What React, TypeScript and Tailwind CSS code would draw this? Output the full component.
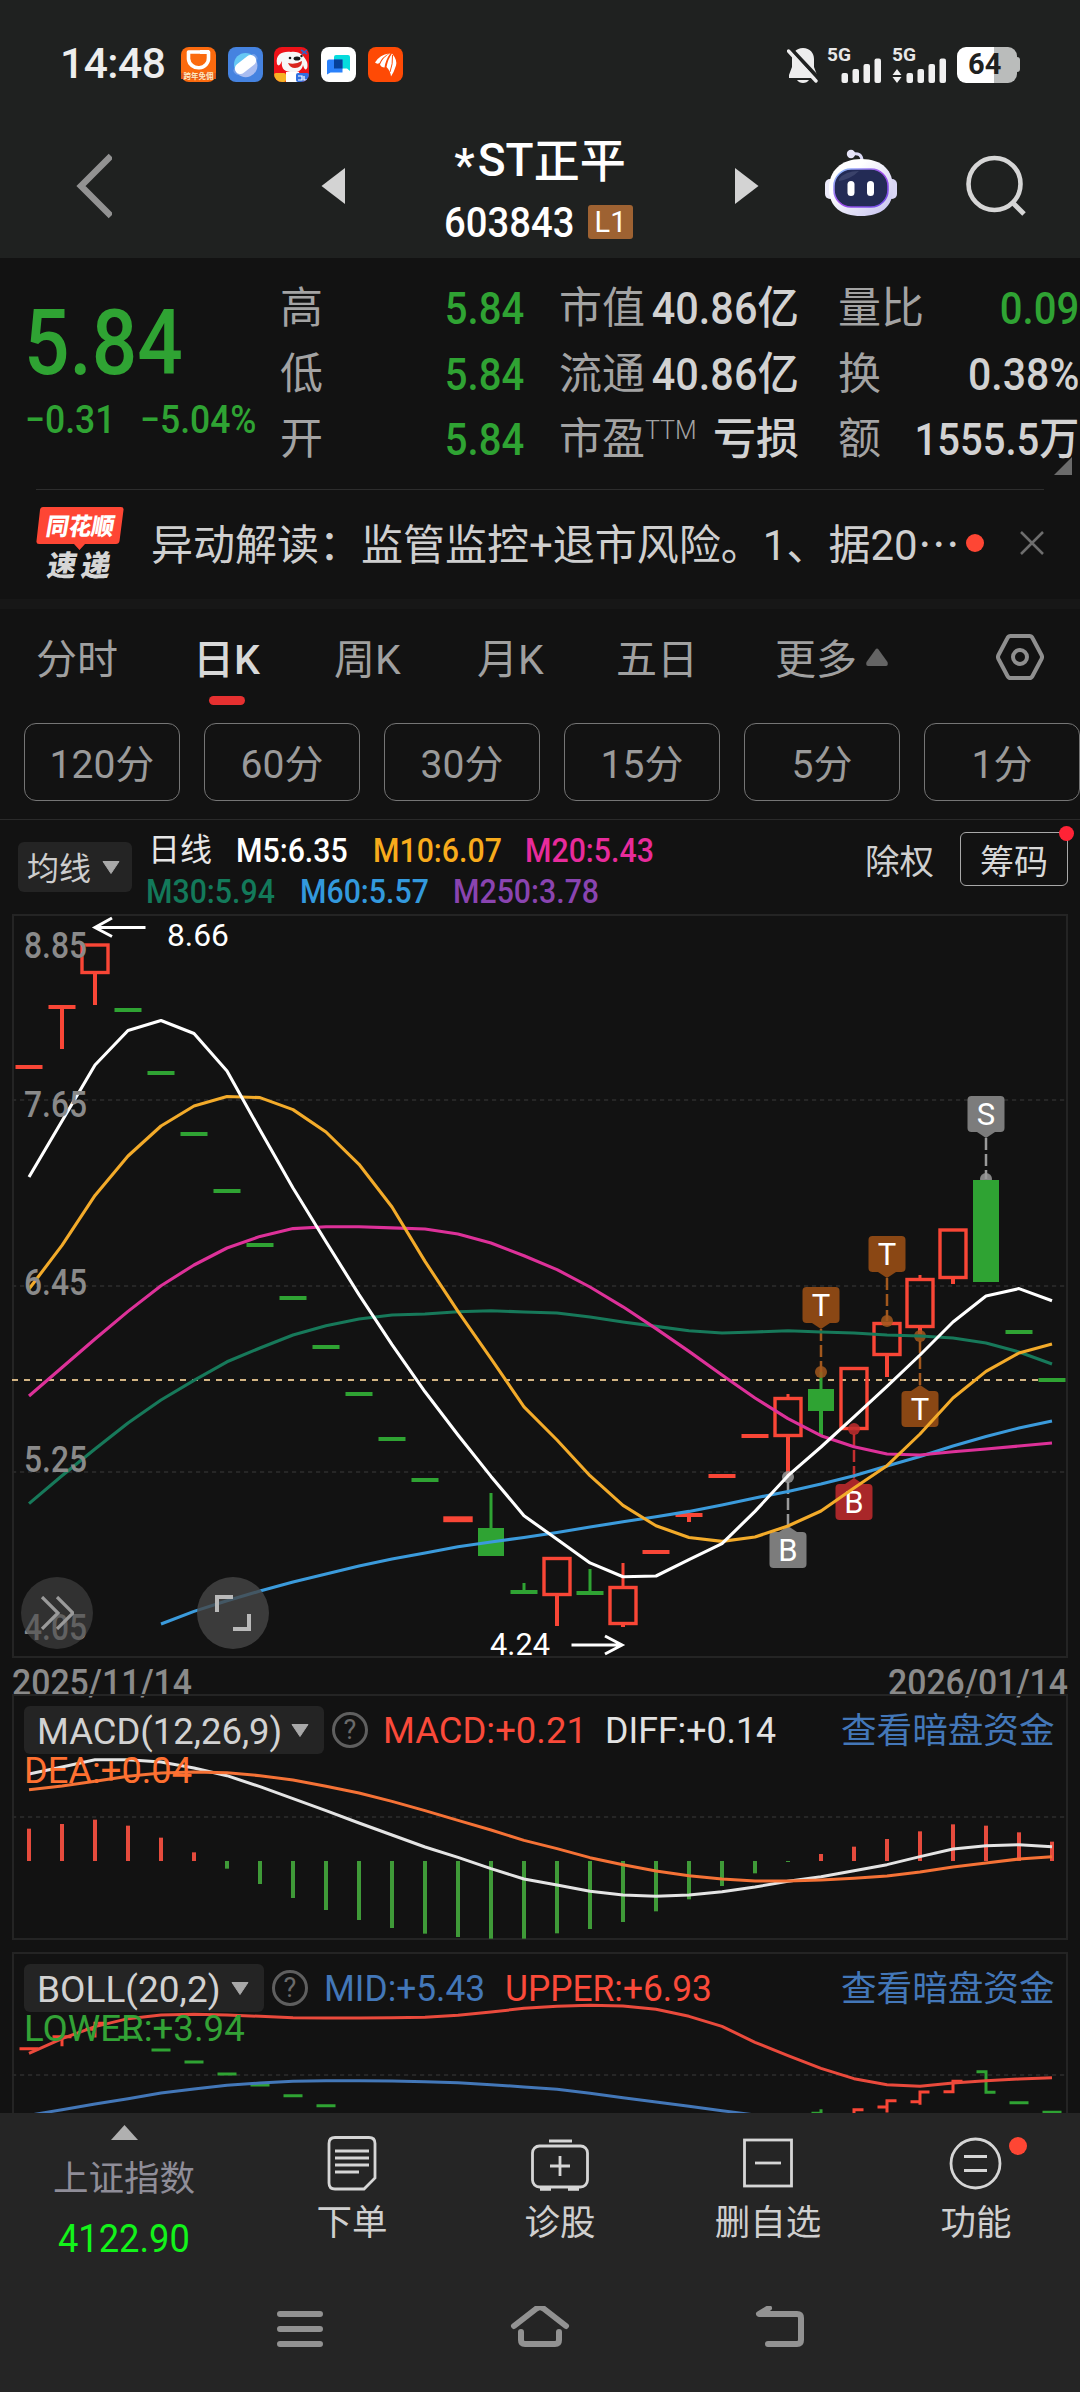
import React from "react";

const X0 = 29;
const STEP = 33;
const px = (i: number) => X0 + STEP * i;
const toPoints = (ys: number[], start = 0) => ys.map((y, i) => `${px(i + start)},${y}`).join(" ");

const RED = "#f94636";
const GREEN = "#2fa333";

type Candle = { k: "dash" | "up" | "down"; c?: string; top: number; bottom?: number; hi?: number; lo?: number };

const candles: Candle[] = [
  { k: "dash", c: RED, top: 1067 },
  { k: "dash", c: RED, top: 1007, lo: 1049 },
  { k: "up", top: 943.5, bottom: 974, lo: 1005 },
  { k: "dash", c: GREEN, top: 1010 },
  { k: "dash", c: GREEN, top: 1073 },
  { k: "dash", c: GREEN, top: 1134 },
  { k: "dash", c: GREEN, top: 1191 },
  { k: "dash", c: GREEN, top: 1245 },
  { k: "dash", c: GREEN, top: 1298 },
  { k: "dash", c: GREEN, top: 1347 },
  { k: "dash", c: GREEN, top: 1394 },
  { k: "dash", c: GREEN, top: 1439 },
  { k: "dash", c: GREEN, top: 1480 },
  { k: "up", top: 1516.5, bottom: 1522 },
  { k: "down", top: 1528, bottom: 1556, hi: 1493 },
  { k: "dash", c: GREEN, top: 1592, hi: 1583 },
  { k: "up", top: 1557, bottom: 1596, lo: 1626 },
  { k: "dash", c: GREEN, top: 1593, hi: 1569 },
  { k: "up", top: 1586, bottom: 1625, hi: 1563, lo: 1627 },
  { k: "dash", c: RED, top: 1552 },
  { k: "dash", c: RED, top: 1515, lo: 1522 },
  { k: "dash", c: RED, top: 1476 },
  { k: "dash", c: RED, top: 1436 },
  { k: "up", top: 1397, bottom: 1437, hi: 1394, lo: 1476 },
  { k: "down", top: 1389, bottom: 1411, hi: 1372, lo: 1435 },
  { k: "up", top: 1367, bottom: 1430 },
  { k: "up", top: 1322, bottom: 1356, lo: 1377 },
  { k: "up", top: 1278, bottom: 1328, hi: 1275, lo: 1334 },
  { k: "up", top: 1228.5, bottom: 1279, lo: 1284 },
  { k: "down", top: 1180, bottom: 1282 },
  { k: "dash", c: GREEN, top: 1332 },
  { k: "dash", c: GREEN, top: 1380 },
];

const m5 = [1177, 1121, 1065, 1030.5, 1020.5, 1033.5, 1071, 1130, 1188, 1241.8, 1294.6, 1344.6, 1391.8, 1435, 1476.4, 1515.7, 1539.3, 1562.9, 1576.8, 1576, 1559.6, 1543.6, 1511.4, 1475.7, 1447, 1416.8, 1386.4, 1355, 1322, 1296, 1288.6, 1300.7];
const m10 = [1289, 1245.4, 1195.4, 1156, 1126, 1106, 1096.5, 1097.6, 1109.6, 1132, 1164.3, 1207, 1261.4, 1311.4, 1358.6, 1406.8, 1440, 1475.7, 1505.4, 1525.7, 1537.5, 1541.4, 1537, 1526, 1511, 1488, 1465.7, 1434, 1398, 1371.4, 1353, 1344];
const m20 = [1396, 1367.5, 1339, 1311.4, 1285.7, 1265, 1248, 1236.4, 1228.6, 1226.8, 1226.8, 1227.9, 1229, 1234, 1243, 1255.7, 1269.6, 1287, 1306.8, 1328.6, 1351.4, 1375, 1398, 1418.6, 1435.7, 1446.8, 1454, 1455, 1451.8, 1449, 1446, 1443];
const m30 = [1503.6, 1475.7, 1449, 1423, 1400, 1380.4, 1361.8, 1348, 1335, 1325.7, 1319, 1315, 1314, 1311.8, 1310.7, 1312, 1313, 1317, 1322, 1326.4, 1330.7, 1333, 1332, 1330.7, 1332, 1333, 1335, 1336, 1338, 1343, 1352, 1364];
const m60 = [1624, 1611.4, 1600.7, 1591, 1582, 1574, 1566, 1559, 1553, 1546.8, 1542, 1537.5, 1532.5, 1527, 1521.8, 1516.8, 1511.4, 1505, 1498, 1491.4, 1484, 1475.7, 1466, 1456.4, 1446, 1436.4, 1428, 1421];

const sub = (v: number) => 1690 + v / 3;
const hist = [416, 402, 389, 407, 443, 487, 536, 582, 624, 660, 690, 714, 731, 741, 746, 746, 730, 717, 696, 664, 628, 588, 550, 516, 492, 470, 447, 424, 403, 407, 427, 455];
const diff = [252, 231, 209, 209, 216, 234, 257, 290, 326, 362, 399, 435, 471, 502, 536, 567, 585, 604, 615, 619, 615, 605, 591, 574, 560, 542, 524, 500, 477, 467, 464, 470].map(sub);
const dea = [299, 288, 274, 259, 249, 246, 248, 257, 270, 289, 309, 334, 362, 391, 420, 451, 476, 503, 524, 543, 557, 567, 573, 573, 570, 565, 558, 546, 531, 519, 507, 500].map(sub);
const upper = [1090, 1046, 1010, 986, 975, 973, 975, 979, 983, 984, 984, 983, 982, 976, 966, 955, 949, 946, 948, 958, 979, 1009, 1057, 1097, 1135, 1166, 1184, 1189, 1179, 1172, 1167, 1163].map(sub);
const mid = [1276, 1259, 1242, 1226, 1209, 1197, 1186, 1179, 1174, 1172, 1172, 1173, 1175, 1178, 1184, 1191, 1198, 1210, 1223, 1236, 1249, 1262, 1275].map(sub);

const bollBars: { i: number; c: string; open: number; close: number; hi?: number; lo?: number }[] = [
  { i: 0, c: RED, open: 1076, close: 1076 },
  { i: 1, c: RED, open: 1040, close: 1040, lo: 1064 },
  { i: 2, c: RED, open: 1018, close: 1000, lo: 1038 },
  { i: 3, c: GREEN, open: 1042, close: 1042 },
  { i: 4, c: GREEN, open: 1080, close: 1080 },
  { i: 5, c: GREEN, open: 1116, close: 1116 },
  { i: 6, c: GREEN, open: 1152, close: 1152 },
  { i: 7, c: GREEN, open: 1185, close: 1185 },
  { i: 8, c: GREEN, open: 1217, close: 1217 },
  { i: 9, c: GREEN, open: 1247, close: 1247 },
  { i: 24, c: GREEN, open: 1270, close: 1282, hi: 1262 },
  { i: 25, c: RED, open: 1290, close: 1259 },
  { i: 26, c: RED, open: 1251, close: 1232, lo: 1263 },
  { i: 27, c: RED, open: 1235, close: 1206, lo: 1240 },
  { i: 28, c: RED, open: 1205, close: 1174 },
  { i: 29, c: GREEN, open: 1145, close: 1207 },
  { i: 30, c: GREEN, open: 1238, close: 1238 },
  { i: 31, c: GREEN, open: 1267, close: 1267 },
];

function CandleMark({ d, i }: { d: Candle; i: number }) {
  const x = px(i);
  const c = d.k === "up" ? RED : d.k === "down" ? GREEN : d.c!;
  const bottom = d.bottom ?? d.top;
  return (
    <g fill={c}>
      {d.hi !== undefined && <rect x={x - 1.5} y={d.hi} width={3} height={d.top - d.hi} />}
      {d.lo !== undefined && <rect x={x - 2} y={bottom} width={4} height={d.lo - bottom} />}
      {d.k === "dash" && <rect x={x - 13.5} y={d.top - 2} width={27} height={4} />}
      {d.k === "down" && <rect x={x - 13} y={d.top} width={26} height={bottom - d.top} />}
      {d.k === "up" && (
        <rect x={x - 13} y={d.top + 1.5} width={26} height={bottom - d.top - 3} fill="none" stroke={c} strokeWidth={3.4} />
      )}
    </g>
  );
}

function Flag({ x, y, color, line, label, dot, up }: { x: number; y: number; color: string; line: string; label: string; dot: number; up?: boolean }) {
  const edge = up ? y : y + 36;
  const tip = up ? y - 6 : y + 42;
  return (
    <g>
      <line x1={x} x2={x} y1={tip} y2={dot} stroke={line} strokeWidth={2.5} strokeDasharray="12 4" />
      <circle cx={x} cy={dot} r={6} fill={line} fillOpacity={0.85} />
      <rect x={x - 18.5} y={y} width={37} height={36} rx={4} fill={color} />
      <path d={`M${x - 9} ${edge}L${x} ${tip}L${x + 9} ${edge}Z`} fill={color} />
      <text x={x} y={y + 29} textAnchor="middle" fontSize={31} fill="#fff">
        {label}
      </text>
    </g>
  );
}

function Label({ x, y, w, size, fill, weight = 400, children }: { x: number; y: number; w: number; size: number; fill: string; weight?: number; children: string }) {
  return (
    <text x={x} y={y} fontSize={size} fill={fill} fontWeight={weight} textLength={w} lengthAdjust="spacingAndGlyphs">
      {children}
    </text>
  );
}

function Frame({ y, h, grid }: { y: number; h: number; grid: number[] }) {
  return (
    <g>
      <rect x={13} y={y} width={1054} height={h} fill="none" stroke="#242424" strokeWidth={2} />
      {grid.map((g) => (
        <line key={g} x1={12} x2={1067} y1={g} y2={g} stroke="#262626" strokeWidth={2} strokeDasharray="4.2 3.8" />
      ))}
    </g>
  );
}

function MainChart() {
  return (
    <svg viewBox="0 914 1080 780" className="block h-[780px] w-[1080px] overflow-visible font-[Roboto]">
      <Frame y={915} h={742} grid={[1100, 1286, 1472]} />
      <line x1={12} x2={1038} y1={1380} y2={1380} stroke="#d3b483" strokeWidth={2} strokeDasharray="6 6" />
      <Flag x={986} y={1096} color="#7c7c7c" line="#9a9a9a" label="S" dot={1179} />
      {candles.map((d, i) => (
        <CandleMark key={i} d={d} i={i} />
      ))}
      <Flag x={821} y={1287} color="#8a4714" line="#a2581d" label="T" dot={1372} />
      <Flag x={887} y={1236} color="#8a4714" line="#a2581d" label="T" dot={1321} />
      <Flag x={920} y={1391} color="#8a4714" line="#a2581d" label="T" dot={1336} up />
      <Flag x={854} y={1484} color="#a92729" line="#c22e2f" label="B" dot={1429} up />
      <Flag x={788} y={1532} color="#7c7c7c" line="#9a9a9a" label="B" dot={1477} up />
      <g fill="none" strokeWidth={3.1} strokeLinejoin="round">
        <polyline points={toPoints(m60, 4)} stroke="#3b9bdc" />
        <polyline points={toPoints(m30)} stroke="#17795a" />
        <polyline points={toPoints(m20)} stroke="#dd3199" />
        <polyline points={toPoints(m10)} stroke="#f3ab2a" />
        <polyline points={toPoints(m5)} stroke="#ffffff" />
      </g>
      <g fill="none" stroke="#fff" strokeWidth={3}>
        <path d="M145.500 927.500H97M112 918L95 927.500L112 936.500" />
        <path d="M571.500 1645H620M605 1636L622 1645L605 1654" />
      </g>
      <Label x={167} y={946} w={62} size={31} fill="#fff">8.66</Label>
      <Label x={490} y={1655} w={60} size={31} fill="#fff">4.24</Label>
      <Label x={24} y={958} w={63} size={36} fill="#8a8a8a" weight={500}>8.85</Label>
      <Label x={24} y={1117} w={63} size={36} fill="#8a8a8a" weight={500}>7.65</Label>
      <Label x={24} y={1294.5} w={63} size={36} fill="#8a8a8a" weight={500}>6.45</Label>
      <Label x={24} y={1471.5} w={63} size={36} fill="#8a8a8a" weight={500}>5.25</Label>
      <Label x={24} y={1640} w={63} size={36} fill="#8a8a8a" weight={500}>4.05</Label>
      <Label x={12} y={1694.5} w={180} size={36} fill="#8a8a8a" weight={500}>2025/11/14</Label>
      <Label x={888} y={1694.5} w={180} size={36} fill="#8a8a8a" weight={500}>2026/01/14</Label>
    </svg>
  );
}

function MacdChart() {
  return (
    <svg viewBox="0 1694 1080 257" className="absolute inset-0 h-[257px] w-[1080px]">
      <Frame y={1695} h={244} grid={[1817]} />
      {hist.map((v, i) => {
        const y = sub(v);
        return <rect key={i} x={px(i) - 2} y={Math.min(y, 1861)} width={4} height={Math.abs(y - 1861)} fill={v < 513 ? "#e64b3d" : "#3f9a38"} />;
      })}
      <g fill="none" strokeWidth={3} strokeLinejoin="round">
        <polyline points={toPoints(diff)} stroke="#e4e4e4" />
        <polyline points={toPoints(dea)} stroke="#f57236" />
      </g>
    </svg>
  );
}

function BollChart() {
  return (
    <svg viewBox="0 1951 1080 162" className="absolute inset-0 h-[162px] w-[1080px]">
      <Frame y={1953} h={244} grid={[2075]} />
      {bollBars.map((b) => {
        const x = px(b.i);
        const o = sub(b.open);
        const c = sub(b.close);
        const hi = b.hi !== undefined ? sub(b.hi) : Math.min(o, c);
        const lo = b.lo !== undefined ? sub(b.lo) : Math.max(o, c);
        return <path key={b.i} d={`M${x - 9.5} ${o}H${x}M${x} ${c}H${x + 9.5}M${x} ${hi - 1.5}V${lo + 1.5}`} stroke={b.c} strokeWidth={3} />;
      })}
      <g fill="none" strokeWidth={3} strokeLinejoin="round">
        <polyline points={toPoints(mid)} stroke="#4377b8" />
        <polyline points={toPoints(upper)} stroke="#ea4a3c" />
      </g>
    </svg>
  );
}

function Down() {
  return (
    <svg viewBox="0 0 18 13" className="h-[13px] w-[18px] shrink-0">
      <path d="M1 0.500H17L9 12.500Z" fill="#a8a8a8" stroke="#a8a8a8" strokeLinejoin="round" />
    </svg>
  );
}

function Help() {
  return (
    <span className="flex size-9 shrink-0 items-center justify-center rounded-full border-[3px] border-[#5f5f5f] text-[27px] leading-none text-[#6a6a6a]">?</span>
  );
}

/* Condensed figures in a fixed-width slot. */
function Narrow({ className = "", box = "", children }: { className?: string; box?: string; children: React.ReactNode }) {
  return (
    <span className={`flex shrink-0 items-center ${box}`}>
      <span className={`inline-block origin-left scale-x-[0.89] whitespace-nowrap ${className}`}>{children}</span>
    </span>
  );
}

function NarrowRight({ className = "", box = "", children }: { className?: string; box?: string; children: React.ReactNode }) {
  return (
    <span className={`flex shrink-0 items-center justify-end ${box}`}>
      <span className={`inline-block origin-right scale-x-[0.89] whitespace-nowrap ${className}`}>{children}</span>
    </span>
  );
}

function AppIcons() {
  return (
    <div className="ml-[17px] flex gap-[11.700px]">
      <svg viewBox="0 0 35 35" className="size-[35px]">
        <rect width="35" height="35" rx="8" fill="#fb6a0e" />
        <path d="M7.500 5H27.500V10.500A10 9.500 0 0 1 7.500 12Z" fill="none" stroke="#fff" strokeWidth="3.600" strokeLinejoin="round" />
        <path d="M19 5H28" stroke="#fff" strokeWidth="4" />
        <rect y="26" width="35" height="6" fill="#e2591a" />
        <text x="17.500" y="32" textAnchor="middle" fontSize="7.500" fontWeight="700" fill="#ffe9c0" fontFamily="Noto Sans CJK SC">跨年免佣</text>
      </svg>
      <svg viewBox="0 0 35 35" className="size-[35px]">
        <rect width="35" height="35" rx="8" fill="#4583e0" />
        <circle cx="17.500" cy="17.500" r="11.500" fill="#66c8f4" />
        <path d="M7 23A11.500 11.500 0 0 0 28.500 14Z" fill="#a9bdf0" />
        <g transform="rotate(-38 17.500 17.500)">
          <rect x="3.500" y="13.500" width="28" height="8" rx="4" fill="#8fb0ee" fillOpacity=".6" />
          <rect x="5.500" y="12" width="24" height="11" rx="5.500" fill="#fff" />
        </g>
      </svg>
      <svg viewBox="0 0 35 35" className="size-[35px]">
        <defs>
          <clipPath id="pup"><rect width="35" height="35" rx="8" /></clipPath>
        </defs>
        <g clipPath="url(#pup)">
          <rect width="35" height="35" fill="#ee1218" />
          <path d="M3 17C1 7 9 4 17 5C26 4 30 9 33 15C35 22 31 26 29 18C28 24 22 27 16 25C9 24 7 20 8 14C6 18 5 20 3 17Z" fill="#f7f7f7" />
          <path d="M14 16Q21 18 28 14Q28 21 21 21Q16 21 14 16Z" fill="#d9251d" />
          <ellipse cx="23" cy="11.500" rx="3.400" ry="2" fill="#1b1b1b" />
          <circle cx="16" cy="11" r="1.300" fill="#1b1b1b" />
          <circle cx="27.500" cy="9" r="1.200" fill="#1b1b1b" />
          <path d="M27 3L33 7M33 3L28 7" stroke="#2f62c8" strokeWidth="1.600" />
          <path d="M12 25H25L27 35H12Z" fill="#fff" />
          <rect x="0" y="26" width="12" height="9" rx="2" fill="#f6b325" />
          <rect x="22" y="26" width="13" height="9" rx="2" fill="#2f6fe0" />
          <path d="M24 29H28V33H24M30 29V33H33" stroke="#fff" strokeWidth="1.200" fill="none" />
        </g>
      </svg>
      <svg viewBox="0 0 35 35" className="size-[35px]">
        <rect width="35" height="35" rx="8" fill="#fff" />
        <path d="M15 8H27Q29 8 29 10V24L26 21.500H13V10Q13 8 15 8Z" fill="#06dcdd" />
        <path d="M8 12.500H21.500V25.500H9.500L6 27.500V14.500Q6 12.500 8 12.500Z" fill="#2a81fb" />
        <path d="M13 12.500H21.500V21.500H13Z" fill="#05419a" />
      </svg>
      <svg viewBox="0 0 35 35" className="size-[35px]">
        <rect width="35" height="35" rx="8" fill="#fe4a05" />
        <path d="M7 15.500Q12 7.500 21 6.500Q14 10 11.500 16Q9 17.500 7 15.500Z" fill="#fff" />
        <path d="M12 17.500Q15 10 22.500 6Q17.500 13 16.500 20.500Q13 20.500 12 17.500Z" fill="#fff" />
        <path d="M18.500 20Q20 12 24 6.500Q29.500 13 28 18.500Q26 25 23 29.500Q22.500 24 18.500 20Z" fill="#fff" />
        <path d="M22 25Q25 17 24.500 8" stroke="#fe4a05" strokeWidth="1" fill="none" />
      </svg>
    </div>
  );
}

function Signal({ data }: { data?: boolean }) {
  return (
    <svg viewBox="0 0 56 36" className="h-9 w-14 overflow-visible">
      <text x="0" y="14" fontSize="18.500" fontWeight="700" fill="#e8e8e8" textLength="24" lengthAdjust="spacingAndGlyphs">5G</text>
      <g fill="#f0f0f0">
        <rect x="14.500" y="26" width="6.500" height="10" rx="2" />
        <rect x="25.500" y="22" width="6.500" height="14" rx="2" />
        <rect x="36.500" y="17" width="6.500" height="19" rx="2" />
        <rect x="47.500" y="11.500" width="6.500" height="24.500" rx="2" />
        {data && <path d="M0.500 28L5 22L9.500 28ZM0.500 30L5 36L9.500 30Z" />}
      </g>
    </svg>
  );
}

function StatusBar() {
  return (
    <div className="flex h-[129px] items-center pl-[60px] text-[#ededed]">
      <div className="w-[104px] text-[42.500px] font-medium leading-none tracking-[-0.5px]">14:48</div>
      <AppIcons />
      <div className="ml-[384px] flex items-center">
        <svg viewBox="0 0 32 36" className="h-9 w-8">
          <path d="M16 1C9 1 5 6 5 12V20L2 28V31H30V28L27 20V12C27 6 23 1 16 1Z" fill="#ededed" />
          <path d="M10 33H22Q20 36 16 36Q12 36 10 33Z" fill="#ededed" />
          <path d="M3 1L32 32" stroke="#1f2120" strokeWidth="4" />
          <path d="M1.500 4L29 34" stroke="#ededed" strokeWidth="3.400" strokeLinecap="round" />
        </svg>
        <div className="ml-2 flex gap-[9px]">
          <Signal />
          <Signal data />
        </div>
        <div className="ml-[9px] flex items-center">
          <div className="flex h-9 w-15 items-center justify-center rounded-[9px] bg-[linear-gradient(90deg,#fff_62%,#babcbb_62%)] pr-1 text-[29px] font-bold leading-none text-[#1f2120]">
            64
          </div>
          <div className="h-[15px] w-[3px] rounded-r-sm bg-[#babcbb]" />
        </div>
      </div>
    </div>
  );
}

function Robot() {
  return (
    <svg viewBox="0 0 72 68" className="h-[68px] w-[72px]">
      <defs>
        <linearGradient id="shell" x1="0" y1="0" x2="1" y2="1">
          <stop offset=".3" stopColor="#ffffff" />
          <stop offset="1" stopColor="#c3bfee" />
        </linearGradient>
        <linearGradient id="rim" x1="0" y1="0" x2="1" y2="1">
          <stop offset="0" stopColor="#8fd0ff" />
          <stop offset=".5" stopColor="#a14bea" />
          <stop offset="1" stopColor="#6a50e8" />
        </linearGradient>
      </defs>
      <path d="M27 5Q37 3 37 12" stroke="#dcdaf6" strokeWidth="3" fill="none" />
      <circle cx="26" cy="5" r="4.200" fill="#e6e4f8" />
      <rect x="0" y="30" width="10" height="20" rx="5" fill="#ecebfa" />
      <rect x="62" y="30" width="10" height="20" rx="5" fill="#d9d6f5" />
      <path d="M36 10C58 10 68 22 68 39C68 58 56 67 36 67C16 67 4 58 4 39C4 22 16 10 36 10Z" fill="url(#shell)" />
      <rect x="9" y="20" width="54" height="38" rx="17" fill="#232b55" stroke="url(#rim)" strokeWidth="1.600" />
      <path d="M14 30Q20 22 34 22Q26 30 14 32Z" fill="#4a5178" fillOpacity=".6" />
      <rect x="22.500" y="32" width="7" height="15" rx="3.500" fill="#fff" />
      <rect x="42" y="32" width="7" height="15" rx="3.500" fill="#fff" />
    </svg>
  );
}

function Header() {
  return (
    <div className="flex h-[129px] items-start">
      <svg viewBox="0 0 36 66" className="ml-[76px] mt-6 h-[66px] w-9">
        <path d="M35 3L5 33L35 63" fill="none" stroke="#929292" strokeWidth="6.500" />
      </svg>
      <svg viewBox="0 0 24 36" className="ml-[209px] mt-[39px] h-9 w-6">
        <path d="M24 0V36L0.500 18Z" fill="#d3d3d3" />
      </svg>
      <div className="ml-[65px] flex w-[260px] flex-col items-center">
        <div className="mt-2 flex items-center text-[46px] font-medium leading-[46px] text-white">
          <span className="relative top-[5px] mr-[3px]">*</span>
          <span>ST</span>
          <span className="relative top-px">正平</span>
        </div>
        <div className="mt-[22px] flex items-center">
          <Narrow box="ml-[-3px] w-[144px] h-[34px]" className="text-[43px] font-medium leading-[34px] text-white">603843</Narrow>
          <span className="flex h-[34px] w-[45px] items-center justify-center rounded-[3px] bg-[#9e6232] text-[29px] leading-none text-white">L1</span>
        </div>
      </div>
      <svg viewBox="0 0 24 36" className="ml-[65px] mt-[39px] h-9 w-6">
        <path d="M0 0V36L23.500 18Z" fill="#d3d3d3" />
      </svg>
      <div className="ml-[66px] mt-5"><Robot /></div>
      <svg viewBox="0 0 62 62" className="ml-[68px] mt-[25px] size-[62px]">
        <circle cx="29.500" cy="30" r="26" fill="none" stroke="#d6d6d6" strokeWidth="4.600" />
        <path d="M48 49L59 60" stroke="#d6d6d6" strokeWidth="5" />
      </svg>
    </div>
  );
}

const quoteRows = [
  ["高", "5.84", "市值", "40.86亿", "量比", "0.09"],
  ["低", "5.84", "流通", "40.86亿", "换", "0.38%"],
  ["开", "5.84", "市盈", "亏损", "额", "1555.5万"],
];

function Quote() {
  return (
    <div className="relative flex h-[231px]">
      <div className="flex w-[280px] flex-col text-[#2fa333]">
        <Narrow box="mt-[41px] ml-[24px] h-[90px]" className="text-[90px] font-medium leading-none">5.84</Narrow>
        <div className="mt-[11px] flex h-[40px]">
          <Narrow box="ml-[25px] w-[115px]" className="!scale-x-[0.91] text-[39px] font-medium leading-none">−0.31</Narrow>
          <Narrow className="!scale-x-[0.91] text-[39px] font-medium leading-none">−5.04%</Narrow>
        </div>
      </div>
      <div className="flex w-[800px] flex-col pt-[18px]">
        {quoteRows.map((r, i) => (
          <div key={r[0]} className="flex h-[65.600px] shrink-0 items-center text-[43px] leading-none text-[#a3a3a3]">
            <span className="w-[80px] shrink-0">{r[0]}</span>
            <NarrowRight box="w-[164px]" className="text-[45px] font-medium text-[#2fa333]">{r[1]}</NarrowRight>
            <span className="ml-[35px] w-[240px] shrink-0 whitespace-nowrap">
              {r[2]}
              {i === 2 && <sup className="relative top-[-15px] align-baseline text-[25px] font-light">TTM</sup>}
            </span>
            {i === 2 ? (
              <span className="flex w-0 shrink-0 justify-end whitespace-nowrap text-[43px] font-medium text-[#d2d2d2]">{r[3]}</span>
            ) : (
              <NarrowRight box="w-0" className="!scale-x-[0.92] text-[45px] font-medium text-[#d2d2d2]">{r[3]}</NarrowRight>
            )}
            <span className="ml-[39px] w-[90px] shrink-0 whitespace-nowrap">{r[4]}</span>
            <NarrowRight box="w-[151px]" className={i === 0 ? "text-[45px] font-medium text-[#2fa333]" : i === 1 ? "!scale-x-[0.91] text-[45px] font-medium text-[#d2d2d2]" : "text-[45px] font-medium text-[#d2d2d2]"}>{r[5]}</NarrowRight>
          </div>
        ))}
      </div>
      <svg viewBox="0 0 18 18" className="absolute right-2 top-[199px] size-[18px]">
        <path d="M18 0V18H0Z" fill="#6b6b6b" />
      </svg>
    </div>
  );
}

function News() {
  return (
    <div className="mx-9 flex h-[110px] items-start border-t border-[#2d2d2d]">
      <svg viewBox="0 0 88 72" className="mt-[17px] h-[72px] w-[88px] overflow-visible" fontFamily="Noto Sans CJK SC" fontWeight="900">
        <path d="M7 0H85Q88 0 87.500 3L83.500 34Q83 37 80 37H49L43.500 43L38 37H3Q0 37 0.500 34L4 3Q4.500 0 7 0Z" fill="#fe4634" />
        <text x="0" y="0" transform="translate(9 28) skewX(-10)" fontSize="24" fill="#fff" textLength="68" lengthAdjust="spacingAndGlyphs">同花顺</text>
        <text x="0" y="0" transform="translate(10 69) skewX(-10)" fontSize="29" fill="#d6d6d6" textLength="63" lengthAdjust="spacing">速递</text>
      </svg>
      <div className="ml-[27px] mt-[31px] w-[806px] whitespace-nowrap text-[42px] leading-[46px] text-[#cfcfcf]">
        异动解读：监管监控+退市风险。1、据20<span className="font-['Noto_Sans_CJK_SC'] leading-none">⋯</span>
      </div>
      <div className="ml-[9px] mt-[44px] size-[18px] rounded-full bg-[#fe4634]" />
      <svg viewBox="0 0 24 24" className="ml-[36px] mt-[41px] size-6">
        <path d="M1 1L23 23M23 1L1 23" stroke="#6e6e6e" strokeWidth="2.500" />
      </svg>
    </div>
  );
}

function Tabs() {
  return (
    <div className="flex h-[114px] pl-[36px] pt-[29px] text-[41px] leading-[44px] text-[#a0a0a0]">
      <span className="w-[157px]">分时</span>
      <span className="flex w-[141px] flex-col font-medium text-[#d8d8d8]">
        日K
        <span className="ml-[16px] mt-[14px] h-[9px] w-9 rounded-full bg-[#e63030]" />
      </span>
      <span className="w-[143px]">周K</span>
      <span className="w-[139px]">月K</span>
      <span className="w-[159px]">五日</span>
      <span className="w-[91px]">更多</span>
      <svg viewBox="0 0 22 18" className="mt-[10px] h-[18px] w-[22px]">
        <path d="M9.500 1.500Q11 -0.500 12.500 1.500L21.500 14Q22.500 18 20 18H2Q-0.500 18 0.500 14Z" fill="#646464" />
      </svg>
      <svg viewBox="0 0 48 46" className="ml-[108px] mt-[-4px] h-[46px] w-12" fill="none" stroke="#8f8f8f" strokeWidth="4">
        <path d="M14.500 2H33.500Q35.500 2 36.500 4L45.500 21Q46.500 23 45.500 25L36.500 42Q35.500 44 33.500 44H14.500Q12.500 44 11.500 42L2.500 25Q1.500 23 2.500 21L11.500 4Q12.500 2 14.500 2Z" />
        <circle cx="24" cy="23" r="7" />
      </svg>
    </div>
  );
}

function Periods() {
  return (
    <div className="flex h-[97px] gap-6 overflow-hidden border-b border-[#2a2a2a] pl-6">
      {["120分", "60分", "30分", "15分", "5分", "1分"].map((t) => (
        <div key={t} className="flex h-[78px] w-[156px] shrink-0 items-center justify-center rounded-xl border border-[#757575] pt-[6px] text-[39px] leading-none text-[#9a9a9a]">
          {t}
        </div>
      ))}
    </div>
  );
}

function Legend() {
  return (
    <div className="flex h-[94px] items-start">
      <div className="ml-[18px] mt-[22px] flex h-[50px] w-[114px] items-center rounded-[6px] bg-[#242424] pl-[9px] text-[32px] leading-none text-[#cdcdcd]">
        <span className="relative top-[2px]">均线</span>
        <span className="ml-[11px] flex"><Down /></span>
      </div>
      <div className="ml-4 mt-[10px] w-[620px] text-[34px] font-medium leading-[41px]">
        <div className="flex h-[41px]">
          <span className="w-[88px] text-[32px] font-normal text-[#e6e6e6]">日线</span>
          <Narrow box="w-[137px]" className="text-white">M5:6.35</Narrow>
          <Narrow box="w-[152px]" className="text-[#f8ab1c]">M10:6.07</Narrow>
          <Narrow className="text-[#e82b9c]">M20:5.43</Narrow>
        </div>
        <div className="flex h-[41px]">
          <Narrow box="ml-[-2px] w-[154px]" className="text-[#13795a]">M30:5.94</Narrow>
          <Narrow box="w-[153px]" className="text-[#3399dd]">M60:5.57</Narrow>
          <Narrow className="text-[#8a44b0]">M250:3.78</Narrow>
        </div>
      </div>
      <span className="ml-[97px] mt-[24px] text-[34.500px] leading-[36px] text-[#cfcfcf]">除权</span>
      <div className="relative ml-[26px] mt-[12px] flex h-[54px] w-[108px] items-center justify-center rounded-[6px] border border-[#a8a8a8] pt-[5px] text-[34px] leading-none text-[#d8d8d8]">
        筹码
        <span className="absolute right-[-7px] top-[-7px] size-[15px] rounded-full bg-[#ff2336]" />
      </div>
    </div>
  );
}

function OverlayButtons() {
  return (
    <>
      <div className="absolute left-[21px] top-[663px] flex size-[72px] items-center justify-center rounded-full bg-[#464646]/60">
        <svg viewBox="0 0 34 34" className="h-[34px] w-[34px]" fill="none" stroke="#9a9a9a" strokeWidth="3.200">
          <path d="M2 1L18 17L2 33M17 1L33 17L17 33" />
        </svg>
      </div>
      <div className="absolute left-[197px] top-[663px] flex size-[72px] items-center justify-center rounded-full bg-[#464646]/80">
        <svg viewBox="0 0 38 38" className="size-[38px]" fill="none" stroke="#b9b9b9" strokeWidth="4">
          <path d="M3 18V3H19M35 20V35H19" />
        </svg>
      </div>
    </>
  );
}

function Indicators() {
  return (
    <>
      <div className="relative h-[257px]">
        <MacdChart />
        <div className="relative flex items-center pl-6 pt-3 text-[37px] leading-none">
          <div className="flex h-[48px] w-[300px] items-center rounded-[6px] bg-[#242424] pl-[13px] text-[#d2d2d2]">
            <Narrow box="w-[254px] mt-[3px]" className="!scale-x-[0.985]">MACD(12,26,9)</Narrow>
            <Down />
          </div>
          <span className="ml-[8px] flex w-[51px]"><Help /></span>
          <Narrow box="w-[222px]" className="!scale-x-[0.985] text-[#fa4a3a]">MACD:+0.21</Narrow>
          <Narrow box="w-[236px]" className="!scale-x-[0.965] text-[#e2e2e2]">DIFF:+0.14</Narrow>
          <span className="relative top-[2px] whitespace-nowrap text-[35.600px] text-[#4377b8]">查看暗盘资金</span>
        </div>
        <Narrow box="relative ml-[24px] mt-[-2px] h-[36px]" className="text-[37px] leading-none text-[#ff7030] !scale-x-[0.98]">DEA:+0.04</Narrow>
      </div>
      <div className="relative h-[162px] overflow-hidden">
        <BollChart />
        <div className="relative flex items-center pl-6 pt-[13px] text-[37px] leading-none">
          <div className="flex h-[48px] w-[240px] items-center rounded-[6px] bg-[#242424] pl-[13px] text-[#d2d2d2]">
            <Narrow box="w-[194px] mt-[3px]" className="!scale-x-[1]">BOLL(20,2)</Narrow>
            <Down />
          </div>
          <span className="ml-[8px] flex w-[52px]"><Help /></span>
          <Narrow box="w-[181px]" className="!scale-x-[0.955] text-[#4377b8]">MID:+5.43</Narrow>
          <Narrow box="w-[336px]" className="!scale-x-[0.955] text-[#fa4a3a]">UPPER:+6.93</Narrow>
          <span className="relative top-[2px] whitespace-nowrap text-[35.600px] text-[#4377b8]">查看暗盘资金</span>
        </div>
        <Narrow box="relative ml-[24px] mt-[-2px] h-[36px]" className="text-[37px] leading-none text-[#33a236] !scale-x-[0.99]">LOWER:+3.94</Narrow>
      </div>
    </>
  );
}

function Action({ icon, label, dot }: { icon: React.ReactNode; label: string; dot?: boolean }) {
  return (
    <div className="relative flex w-52 flex-col items-center pt-[21px]">
      <svg viewBox="0 0 58 58" className="size-[58px]" fill="none" stroke="#d6d6d6" strokeWidth="2.800">
        {icon}
      </svg>
      <span className="mt-[13px] text-[35.500px] leading-[36px] text-[#cfcfcf]">{label}</span>
      {dot && <span className="absolute left-[137px] top-[24px] size-[18px] rounded-full bg-[#fe4634]" />}
    </div>
  );
}

function BottomBar() {
  return (
    <div className="h-[279px] bg-[#252525]">
      <div className="flex h-[170px]">
        <div className="flex w-[248px] flex-col items-center pt-3">
          <svg viewBox="0 0 27 15" className="h-[15px] w-[27px]">
            <path d="M13.500 0L27 15H0Z" fill="#b0b0b0" />
          </svg>
          <span className="mt-[21px] text-[35.500px] leading-[36px] text-[#8f8d98]">上证指数</span>
          <span className="mt-[22px] scale-x-[0.93] text-[39px] leading-[40px] text-[#13f41a]">4122.90</span>
        </div>
        <Action
          label="下单"
          icon={
            <>
              <path d="M12 3.500H46Q52 3.500 52 9.500V44L41 55H12Q6 55 6 49V9.500Q6 3.500 12 3.500Z" />
              <path d="M12 17H46M12 24H46M12 31H46M12 38H36" strokeWidth="3" />
            </>
          }
        />
        <Action
          label="诊股"
          icon={
            <>
              <rect x="1.500" y="12" width="55" height="41" rx="7" />
              <path d="M18 7H41M29 22V42M19 32H39" />
              <path d="M9 55H20M37 55H48" strokeWidth="3.600" />
            </>
          }
        />
        <Action
          label="删自选"
          icon={
            <>
              <rect x="5.500" y="6" width="47" height="46" />
              <path d="M16 29H42" />
            </>
          }
        />
        <Action
          label="功能"
          dot
          icon={
            <>
              <circle cx="28.500" cy="29.500" r="24.500" />
              <path d="M17 22.500H40M17 36.500H40" />
            </>
          }
        />
      </div>
      <div className="flex h-[92px] items-center justify-center gap-[180px]">
        <svg viewBox="0 0 60 46" className="h-[46px] w-15" fill="none" stroke="#929292" strokeWidth="6" strokeLinecap="round" strokeLinejoin="round">
          <path d="M10 8H50M10 23H50M10 38H50" />
        </svg>
        <svg viewBox="0 0 60 46" className="h-[46px] w-15" fill="none" stroke="#929292" strokeWidth="6" strokeLinecap="round" strokeLinejoin="round">
          <path d="M4 20L26.500 2.500Q30 0 33.500 2.500L56 20M11 26V34Q11 38 15 38H45Q49 38 49 34V26" />
        </svg>
        <svg viewBox="0 0 60 46" className="h-[46px] w-15" fill="none" stroke="#929292" strokeWidth="6" strokeLinecap="round" strokeLinejoin="round">
          <path d="M19 2L9 8H47Q51 8 51 12V34Q51 38 47 38H18" />
        </svg>
      </div>
    </div>
  );
}

export default function App() {
  return (
    <div className="h-[2392px] w-[1080px] overflow-hidden bg-[#121212] font-[Roboto,'Noto_Sans_CJK_SC',sans-serif]">
      <div className="h-[258px] bg-[#1f2120]">
        <StatusBar />
        <Header />
      </div>
      <Quote />
      <News />
      <div className="h-[10px] bg-[#171717]" />
      <Tabs />
      <Periods />
      <Legend />
      <div className="relative h-[780px]">
        <MainChart />
        <OverlayButtons />
      </div>
      <Indicators />
      <BottomBar />
    </div>
  );
}
